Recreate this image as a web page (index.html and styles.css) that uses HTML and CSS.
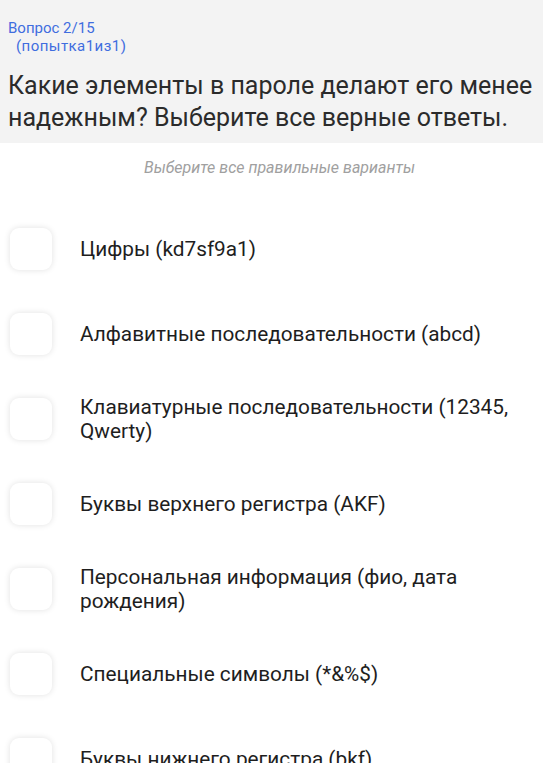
FILE: index.html
```html
<!doctype html>
<html lang="ru">
  <head>
    <meta charset="UTF-8" />
    <meta name="viewport" content="width=device-width, initial-scale=1.0" />
    <title>Вопрос 2/15</title>
    <link rel="stylesheet" href="styles.css">
  </head>
  <body>
    <div class="header">
      <div class="counter">Вопрос 2/15</div>
      <div class="attempt">(попытка1из1)</div>
      <h1 class="question">Какие элементы в пароле делают его менее надежным? Выберите все верные ответы.</h1>
    </div>
    <div class="hint">Выберите все правильные варианты</div>
    <ul class="answers">
      <li class="answer"><span class="box"></span><span class="label">Цифры (kd7sf9a1)</span></li>
      <li class="answer"><span class="box"></span><span class="label">Алфавитные последовательности (abcd)</span></li>
      <li class="answer"><span class="box"></span><span class="label">Клавиатурные последовательности (12345, Qwerty)</span></li>
      <li class="answer"><span class="box"></span><span class="label">Буквы верхнего регистра (AKF)</span></li>
      <li class="answer"><span class="box"></span><span class="label">Персональная информация (фио, дата рождения)</span></li>
      <li class="answer"><span class="box"></span><span class="label">Специальные символы (*&amp;%$)</span></li>
      <li class="answer"><span class="box"></span><span class="label">Буквы нижнего регистра (bkf)</span></li>
    </ul>
  </body>
</html>
```

FILE: styles.css
```css
body {
  margin: 0;
  padding: 0;
  background-color: #ffffff;
  font-family: Roboto, "Noto Sans", sans-serif;
  color: #212121;
}

.header {
  background-color: #f3f3f3;
  padding: 19px 10px 9px 8px;
}

.counter,
.attempt {
  color: #3f6ddf;
  font-size: 15px;
  line-height: 18px;
}

.attempt {
  padding-left: 8px;
  letter-spacing: 0.45px;
}

.question {
  margin: 15px 0 0;
  font-size: 25px;
  font-weight: normal;
  line-height: 32px;
  color: #2b2b2b;
}

.hint {
  text-align: center;
  font-size: 16px;
  line-height: 19px;
  font-style: italic;
  color: #a0a0a0;
  padding: 15px 0 0 16px;
}

.answers {
  list-style: none;
  margin: 0;
  padding: 51px 12px 0 10px;
}

.answer {
  display: flex;
  align-items: center;
  min-height: 42px;
  padding-bottom: 43px;
}

.box {
  flex: none;
  width: 42px;
  height: 42px;
  border-radius: 9px;
  background-color: #ffffff;
  box-shadow: 0 0 6px rgba(0, 0, 0, 0.12);
}

.label {
  margin: -3px 0 -3px 28px;
  font-size: 20.8px;
  line-height: 24px;
  color: #1e1e1e;
}
```
